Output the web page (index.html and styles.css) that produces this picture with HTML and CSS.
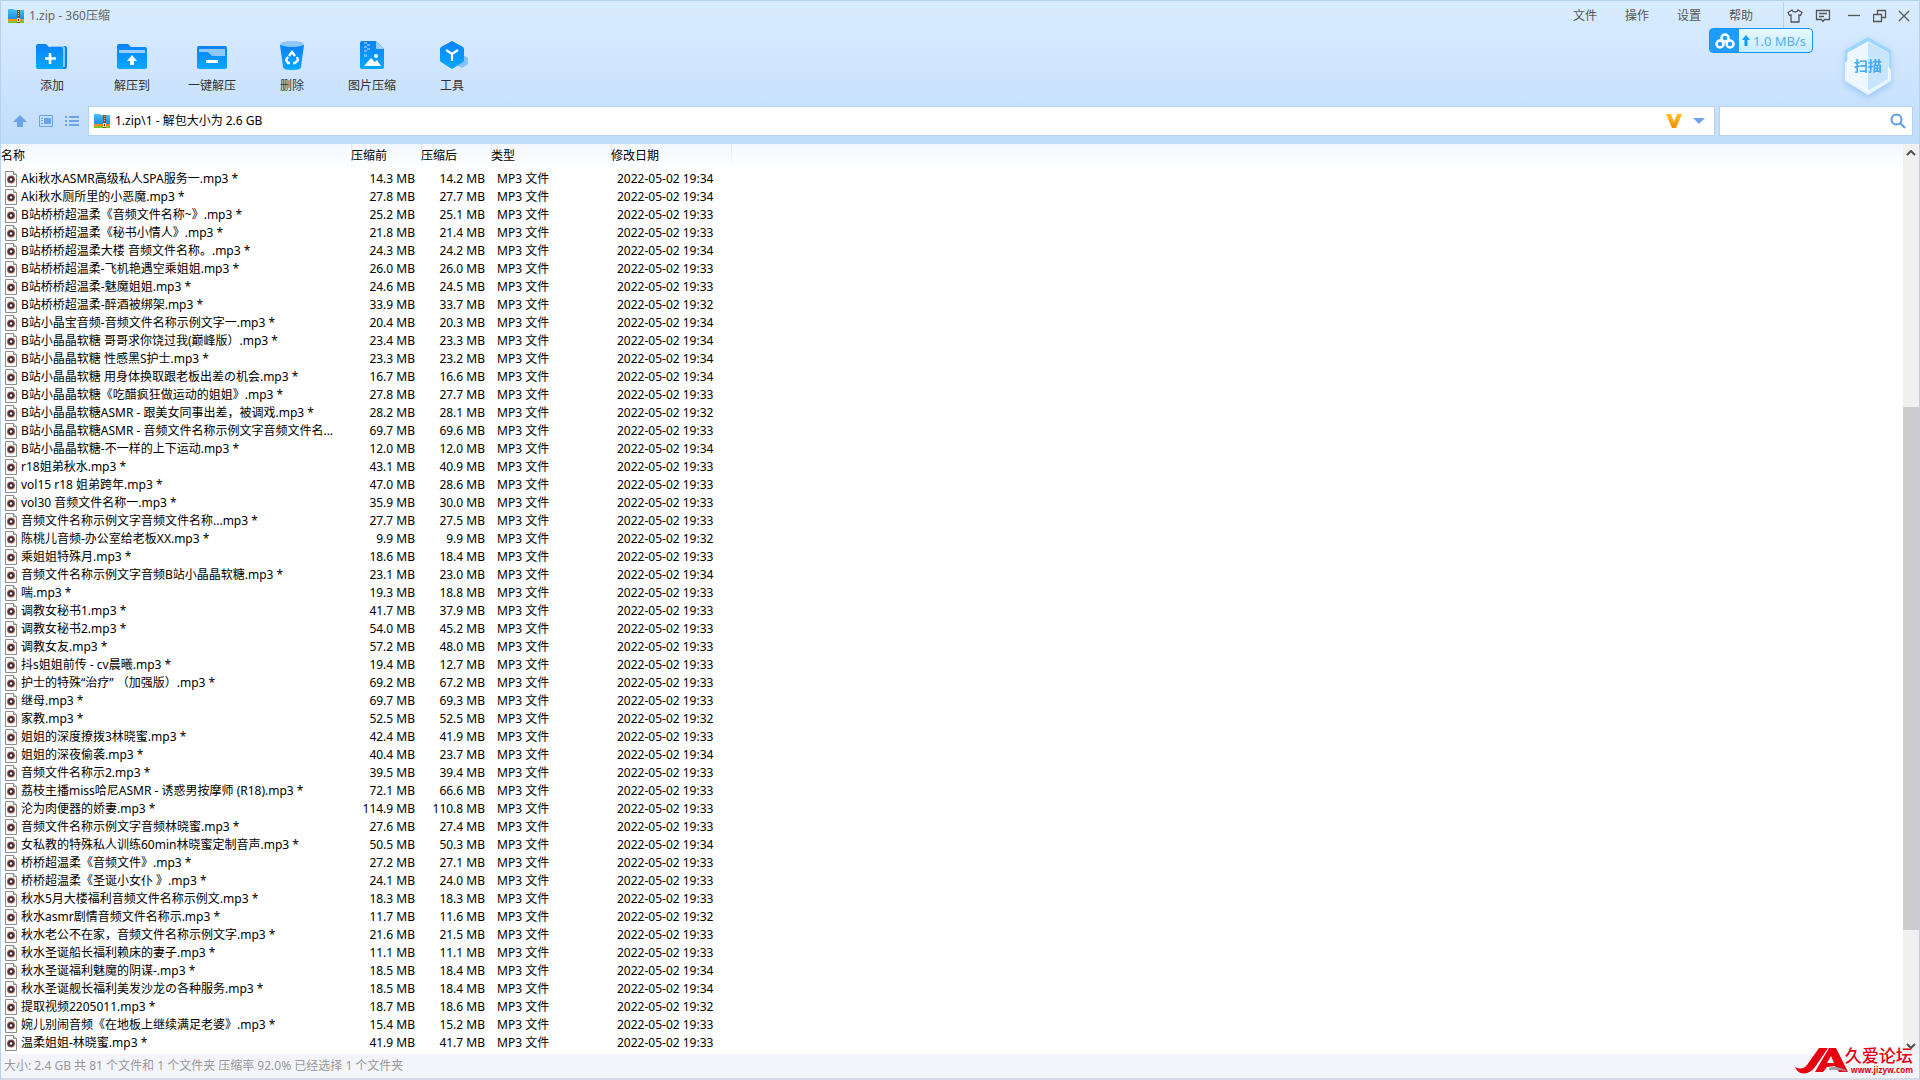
FILE: index.html
```html
<!DOCTYPE html>
<html lang="zh-CN">
<head>
<meta charset="utf-8">
<title>1.zip - 360压缩</title>
<link rel="stylesheet" href="styles.css">
</head>
<body>
<svg class="defs" aria-hidden="true">
  <defs>
    <linearGradient id="blue" x1="0" y1="0" x2="0" y2="1"><stop offset="0" stop-color="#0a82fb"/><stop offset="1" stop-color="#04a8ff"/></linearGradient>
    <linearGradient id="folder" x1="0" y1="0" x2="0" y2="1"><stop offset="0" stop-color="#4cc0f5"/><stop offset="1" stop-color="#1c8fe0"/></linearGradient>
    <linearGradient id="gold" x1="0" y1="0" x2="0" y2="1"><stop offset="0" stop-color="#ffc21f"/><stop offset="1" stop-color="#ff8a00"/></linearGradient>
    <radialGradient id="disc"><stop offset="0.3" stop-color="#333"/><stop offset="0.6" stop-color="#3b2a3b"/><stop offset="1" stop-color="#c06a50"/></radialGradient>
    <symbol id="zip" viewBox="0 0 16 14">
      <path d="M0 0h6l1 1h9v9H0z" fill="url(#folder)"/>
      <path d="M0 10h16v2H0z" fill="#ff8d1a"/><path d="M0 12h16v2H0z" fill="#78c52c"/>
      <path d="M9 1h3v13H9z" fill="#9a4b12"/><path d="M10 2h1v1h-1zM10 4h1v1h-1zM10 6h1v1h-1z" fill="#f0b050"/>
      <path d="M9 9h3v4H9z" fill="#ffe08a"/><path d="M10 10h1v2h-1z" fill="#5b2b06"/>
    </symbol>
    <symbol id="mp3" viewBox="0 0 12 16">
      <path d="M.5.5h8l3 3v12H.5z" fill="#fbfbfb" stroke="#8a8a8a"/>
      <path d="M8.500.5v3h3" fill="#ddd" stroke="#8a8a8a"/>
      <circle cx="6" cy="8.500" r="4" fill="url(#disc)"/><circle cx="6" cy="8.500" r="1.200" fill="#fff"/>
    </symbol>
  </defs>
</svg>
<div class="window">
  <header class="top">
    <div class="titlebar">
      <div class="title"><svg width="16" height="14"><use href="#zip"/></svg><span>1.zip - 360压缩</span></div>
      <nav class="menu">
        <button>文件</button><button>操作</button><button>设置</button><button>帮助</button>
      </nav>
      <div class="controls">
        <button aria-label="皮肤"><svg width="16" height="14" viewBox="0 0 16 14"><path d="M5 1 1 3.500l1.500 3L4 6v7h8V6l1.500.500 1.500-3L11 1c-.500 1.500-1.500 2-3 2S5.500 2.500 5 1z"/></svg></button>
        <button aria-label="反馈"><svg width="16" height="14" viewBox="0 0 16 14"><path d="M1.500 1.500h13v9H9.500L8 12.500 6.500 10.500h-5zM4 4.500h8M4 7.500h5"/></svg></button>
        <button aria-label="最小化"><svg width="14" height="14" viewBox="0 0 14 14"><path d="M1 6.500h12"/></svg></button>
        <button aria-label="还原"><svg width="14" height="14" viewBox="0 0 14 14"><path d="M.5 5.500h8v7h-8zM4.500 5V1.500h8v7H9"/></svg></button>
        <button aria-label="关闭"><svg width="12" height="14" viewBox="0 0 12 14"><path d="m1 2 10 10M11 2 1 12"/></svg></button>
      </div>
    </div>
    <div class="toolbar">
      <button><svg width="32" height="30" viewBox="0 0 32 30"><path d="M22 4h7q2 0 2 2v19q0 2-2 2h-4z" fill="#0a82fb"/><path d="M14 4h13q2 0 2 2v19h-3z" fill="#8cc5ff"/><path d="M0 4q0-2 2-2h8l3 3h12q2 0 2 2v20H2q-2 0-2-2z" fill="url(#blue)"/><path d="M14 11v11M9 16.500h11" stroke="#fff" stroke-width="2.600"/></svg>添加</button>
      <button><svg width="30" height="30" viewBox="0 0 30 30"><path d="M0 4q0-2 2-2h9l3 3h14q2 0 2 2v18q0 2-2 2H2q-2 0-2-2z" fill="url(#blue)"/><path d="M2 8h26v3H2z" fill="#9bcdff"/><path d="m15 13 5 6h-3v4h-4v-4h-3z" fill="#fff"/></svg>解压到</button>
      <button><svg width="30" height="30" viewBox="0 0 30 30"><rect y="4" width="30" height="23" rx="2" fill="url(#blue)"/><path d="M2 7h26v7H15l-4-4H2z" fill="#8fc8ff"/><path d="M9 19.500h12" stroke="#fff" stroke-width="3"/></svg>一键解压</button>
      <button><svg width="26" height="30" viewBox="0 0 26 30"><path d="m1 3 3 22q0 3 9 3t9-3l3-22z" fill="url(#blue)"/><ellipse cx="13" cy="2" rx="12" ry="3" fill="#8fc8ff"/><path d="m10 14 3-4 3 4M18 15l1 3-3 3h-2M11 21H9l-2-3 2-3" fill="none" stroke="#fff" stroke-width="2.300"/></svg>删除</button>
      <button><svg width="24" height="30" viewBox="0 0 24 30"><path d="M0 1q0-2 2-2h14l8 8v18q0 2-2 2H2q-2 0-2-2z" fill="url(#blue)"/><path d="M16-1v7q0 1 1 1h7z" fill="#9bd0ff"/><path d="M4 0h3v2H4zM7 2h3v2H7zM4 4h3v2H4zM7 6h3v2H7zM4 8h3v2H4zM4 12h3v3H4z" fill="#6fb8ff"/><path d="m4 24 7-8 4 4 2-2 4 6z" fill="#fff"/><circle cx="16" cy="14" r="2" fill="#fff"/></svg>图片压缩</button>
      <button><svg width="26" height="30" viewBox="0 0 26 30"><path d="m24 13 5 3v6l-6 4-4-2z" fill="#86c1fa"/><path d="m13-1 11 6q1 1 1 2v11q0 2-1 2l-11 7-11-7q-1 0-1-2V7q0-1 1-2z" fill="url(#blue)"/><path d="m7 8 6 4 6-4M13 12v7" stroke="#fff" stroke-width="2.200" fill="none"/></svg>工具</button>
    </div>
    <div class="address-row">
      <div class="views">
        <button aria-label="上一级"><svg width="14" height="14" viewBox="0 0 14 14"><path d="m7 1 7 7h-4v5H4V8H0z" fill="#6aa2ec"/></svg></button>
        <button aria-label="缩略图"><svg width="14" height="14" viewBox="0 0 14 14"><path d="M.5 1.500h13v11H.5z" fill="none" stroke="#6aa2ec"/><path d="M5 4h7v6H5zM2 4h2v1H2zM2 6h2v1H2zM2 9h2v1H2z" fill="#6aa2ec"/></svg></button>
        <button aria-label="列表"><svg width="14" height="14" viewBox="0 0 14 14"><path d="M0 2h2v2H0zM4 2h10v2H4zM0 6h2v2H0zM4 6h10v2H4zM0 10h2v2H0zM4 10h10v2H4z" fill="#6aa2ec"/></svg></button>
      </div>
      <div class="address"><svg width="16" height="14"><use href="#zip"/></svg><input type="text" aria-label="路径" value="1.zip\1 - 解包大小为 2.6 GB">
        <svg width="16" height="14" viewBox="0 0 16 14"><path d="M0 0h5l3 8 3-8h5l-6 14H6z" fill="url(#gold)"/></svg>
        <button aria-label="历史"><svg width="12" height="6" viewBox="0 0 12 6"><path d="M0 0h12L6 6z" fill="#6fa3ea"/></svg></button>
      </div>
      <div class="search"><input type="text" aria-label="搜索"><svg width="16" height="16" viewBox="0 0 16 16"><circle cx="6.500" cy="6.500" r="5" fill="none" stroke="#5e9bea" stroke-width="2"/><path d="m10 10 5 5" stroke="#5e9bea" stroke-width="2"/></svg></div>
    </div>
    <div class="speed"><span class="cloud"><svg width="20" height="16" viewBox="0 0 20 16"><g fill="none" stroke="#fff" stroke-width="2.500"><circle cx="10" cy="5" r="3.500"/><circle cx="5" cy="11" r="3.500"/><circle cx="15" cy="11" r="3.500"/></g></svg></span><svg width="8" height="12" viewBox="0 0 8 12"><path d="m4 0 4 5H5.500v6h-3V5H0z" fill="#0a9df5"/></svg><span>1.0 MB/s</span></div>
    <button class="scan"><svg width="48" height="58" viewBox="0 0 48 58"><path d="m24 0 23 13v31L24 58 1 44V13z" fill="#e6f4ff"/><path d="m24 0 23 13v20L24 4 1 26V13z" fill="#9dd6ff"/><path d="m24 5 20 11v26L24 54 4 42V16z" fill="#edf7ff" stroke="#fff"/><path d="m24 5 20 11v26L24 54z" fill="#c7e5fd"/></svg><span>扫描</span></button>
  </header>
  <main class="content">
    <div class="list">
      <table class="files">
        <colgroup><col class="c-name"><col class="c-size"><col class="c-size"><col class="c-wide"><col class="c-wide"><col></colgroup>
        <thead><tr><th>名称</th><th>压缩前</th><th>压缩后</th><th>类型</th><th>修改日期</th><th></th></tr></thead>
        <tbody id="rows"></tbody>
      </table>
    </div>
    <div class="scrollbar">
      <svg width="10" height="6" viewBox="0 0 10 6"><path d="m1 5 4-4 4 4" fill="none" stroke="#505050" stroke-width="2"/></svg>
      <div class="track"><div class="thumb"></div></div>
      <svg width="10" height="6" viewBox="0 0 10 6"><path d="m1 1 4 4 4-4" fill="none" stroke="#505050" stroke-width="2"/></svg>
    </div>
  </main>
  <footer class="status">大小: 2.4 GB 共 81 个文件和 1 个文件夹 压缩率 92.0% 已经选择 1 个文件夹</footer>
  <div class="brand">
    <svg width="54" height="28" viewBox="0 0 54 28"><path d="M24 1h9L20 20Q14 28 6 26 2 25 0 20q7 4 12-2z" fill="#e60012"/><path d="M34 1h7l12 24h-9l-4-6-8 1-4 5h-8z" fill="#e60012"/><path d="m36 9 3 7h-7z" fill="#f4f5fa"/><path d="M34 21q9-3 19 4-9-3-19-2z" fill="#999"/></svg>
    <div class="brand-text"><b>久爱论坛</b><span>www.jizyw.com</span></div>
  </div>
</div>
<script src="script.js"></script>
</body>
</html>
```
FILE: styles.css
```css
* { box-sizing: border-box; }
body {
  margin: 0;
  font: 12px/18px "Noto Sans", "Noto Sans CJK SC", sans-serif;
  color: #000;
}
button, input {
  font: inherit;
  color: inherit;
  border: 0;
  padding: 0;
  background: none;
}
svg { display: block; flex: none; }
.defs { position: absolute; width: 0; height: 0; }
.window {
  position: relative;
  display: flex;
  flex-direction: column;
  height: 100vh;
  border: 1px solid #b3d3f3;
  border-bottom: 2px solid #d5dae4;
  background: #fff;
}
.top {
  position: relative;
  flex: none;
  background: linear-gradient(#d9ecff, #cfe5fe 50%, #c0ddf9);
}
.titlebar {
  display: flex;
  align-items: center;
  height: 30px;
  padding-right: 9px;
  color: #666;
}
.title { display: flex; gap: 5px; flex: 1; padding-left: 7px; align-items: center; }
.menu { display: flex; gap: 28px; padding-right: 30px; color: #555; }
.controls { display: flex; align-items: center; gap: 12px; height: 28px; padding-left: 3px; border-left: 1px solid #b3d3f3; }
.controls svg { fill: none; stroke: #555; stroke-width: 1.3; }
.controls button:nth-child(3) { margin-left: 4px; }
.controls button:nth-child(4) { margin-right: -1px; }
.toolbar { display: flex; padding: 11px 0 0 11px; color: #333; }
.toolbar button {
  display: flex;
  flex-direction: column;
  align-items: center;
  gap: 5px;
  width: 80px;
}
.toolbar svg { overflow: visible; }
.address-row { display: flex; gap: 6px; padding: 12px 7px 9px 12px; }
.views { display: flex; gap: 12px; align-items: center; width: 70px; }
.address, .search {
  display: flex;
  align-items: center;
  height: 28px;
  background: #fff;
  outline: 1px solid #b4d3f2;
}
.address { flex: 1; padding: 0 9px 0 5px; gap: 5px; }
.address input { flex: 1; }
.address button { margin-left: 6px; }
.search { width: 192px; padding-right: 6px; }
.search input { flex: 1; min-width: 0; }
.speed {
  position: absolute;
  top: 27px;
  right: 106px;
  display: flex;
  align-items: center;
  gap: 3px;
  width: 104px;
  height: 25px;
  border: 1px solid #1495fb;
  border-radius: 4px;
  background: linear-gradient(#e8f9ff, #c5ecff);
  color: #50b0f5;
  font-size: 13px;
}
.cloud { display: grid; place-items: center; width: 29px; height: 23px; background: #1f9dff; }
.scan {
  position: absolute;
  top: 36px;
  right: 27px;
  display: grid;
  place-items: center;
  color: #43aaf8;
  font-size: 14px;
  font-weight: 700;
  filter: drop-shadow(0 3px 3px #9cc8f5);
}
.scan > * { grid-area: 1 / 1; }
.content { display: flex; flex: 1; min-height: 0; }
.list { flex: 1; min-width: 0; overflow: hidden; }
.files { width: 100%; table-layout: fixed; border-collapse: collapse; }
.c-name { width: 350px; }
.c-size { width: 70px; }
.c-wide { width: 120px; }
.files th {
  height: 26px;
  padding: 0 0 2px;
  font-weight: 400;
  text-align: left;
  background: linear-gradient(#f2f8fe, #fff);
}
.files th + th { background: linear-gradient(#d5e8fb, #fff) left / 1px 100% no-repeat, linear-gradient(#f2f8fe, #fff); }
.files td { height: 18px; padding: 0 6px; white-space: nowrap; }
.files td:nth-child(2), .files td:nth-child(3) { text-align: right; }
.files td:first-child { padding: 0 10px 0 4px; }
.file { display: flex; gap: 4px; align-items: center; height: 18px; }
.file span { overflow: hidden; text-overflow: ellipsis; }
.scrollbar {
  display: flex;
  flex-direction: column;
  align-items: center;
  width: 16px;
  padding: 6px 0 5px;
  background: #f0f0f0;
}
.track { display: flex; flex-direction: column; flex: 1; width: 100%; padding: 251px 0 113px; }
.thumb { flex: 1; background: #cdcdcd; }
.status {
  flex: none;
  height: 24px;
  padding: 2px 3px;
  line-height: 20px;
  background: #f4f5fa;
  color: #999;
}
.brand { position: absolute; right: 6px; bottom: 3px; display: flex; color: #e60012; }
.brand-text { display: flex; flex-direction: column; margin-left: -4px; }
.brand-text b { font-size: 17px; line-height: 17px; font-weight: 500; }
.brand-text span { padding-left: 6px; font: 700 8px/11px "Open Sans", sans-serif; }
```
FILE: script.js
```js
// name | size before | size after | minute of 2022-05-02 19:xx
const files = `Aki秋水ASMR高级私人SPA服务一|14.3|14.2|34
Aki秋水厕所里的小恶魔|27.8|27.7|34
B站桥桥超温柔《音频文件名称~》|25.2|25.1|33
B站桥桥超温柔《秘书小情人》|21.8|21.4|33
B站桥桥超温柔大楼 音频文件名称。|24.3|24.2|34
B站桥桥超温柔-飞机艳遇空乘姐姐|26.0|26.0|33
B站桥桥超温柔-魅魔姐姐|24.6|24.5|33
B站桥桥超温柔-醉酒被绑架|33.9|33.7|32
B站小晶宝音频-音频文件名称示例文字一|20.4|20.3|34
B站小晶晶软糖 哥哥求你饶过我(巅峰版）|23.4|23.3|34
B站小晶晶软糖 性感黑S护士|23.3|23.2|34
B站小晶晶软糖 用身体换取跟老板出差の机会|16.7|16.6|34
B站小晶晶软糖《吃醋疯狂做运动的姐姐》|27.8|27.7|33
B站小晶晶软糖ASMR - 跟美女同事出差，被调戏|28.2|28.1|32
B站小晶晶软糖ASMR - 音频文件名称示例文字音频文件名称|69.7|69.6|33
B站小晶晶软糖-不一样的上下运动|12.0|12.0|34
r18姐弟秋水|43.1|40.9|33
vol15 r18 姐弟跨年|47.0|28.6|33
vol30 音频文件名称一|35.9|30.0|33
音频文件名称示例文字音频文件名称..|27.7|27.5|33
陈桃儿音频-办公室给老板XX|9.9|9.9|32
乘姐姐特殊月|18.6|18.4|33
音频文件名称示例文字音频B站小晶晶软糖|23.1|23.0|34
喘|19.3|18.8|33
调教女秘书1|41.7|37.9|33
调教女秘书2|54.0|45.2|33
调教女友|57.2|48.0|33
抖s姐姐前传 - cv晨曦|19.4|12.7|33
护士的特殊“治疗” （加强版）|69.2|67.2|33
继母|69.7|69.3|33
家教|52.5|52.5|32
姐姐的深度撩拨3林晓蜜|42.4|41.9|33
姐姐的深夜偷袭|40.4|23.7|34
音频文件名称示2|39.5|39.4|33
荔枝主播miss哈尼ASMR - 诱惑男按摩师 (R18)|72.1|66.6|33
沦为肉便器的娇妻|114.9|110.8|33
音频文件名称示例文字音频林晓蜜|27.6|27.4|33
女私教的特殊私人训练60min林晓蜜定制音声|50.5|50.3|34
桥桥超温柔《音频文件》|27.2|27.1|33
桥桥超温柔《圣诞小女仆 》|24.1|24.0|33
秋水5月大楼福利音频文件名称示例文|18.3|18.3|33
秋水asmr剧情音频文件名称示|11.7|11.6|32
秋水老公不在家，音频文件名称示例文字|21.6|21.5|33
秋水圣诞船长福利赖床的妻子|11.1|11.1|33
秋水圣诞福利魅魔的阴谋-|18.5|18.4|34
秋水圣诞舰长福利美发沙龙の各种服务|18.5|18.4|34
提取视频2205011|18.7|18.6|32
婉儿别闹音频《在地板上继续满足老婆》|15.4|15.2|33
温柔姐姐-林晓蜜|41.9|41.7|33`.split("\n");

document.getElementById("rows").innerHTML = files.map(line => {
  const [name, before, after, minute] = line.split("|");
  return `<tr><td><div class="file"><svg width="12" height="16"><use href="#mp3"/></svg><span>${name}.mp3 *</span></div></td>
    <td>${before} MB</td><td>${after} MB</td><td>MP3 文件</td><td>2022-05-02 19:${minute}</td><td></td></tr>`;
}).join("");
```
